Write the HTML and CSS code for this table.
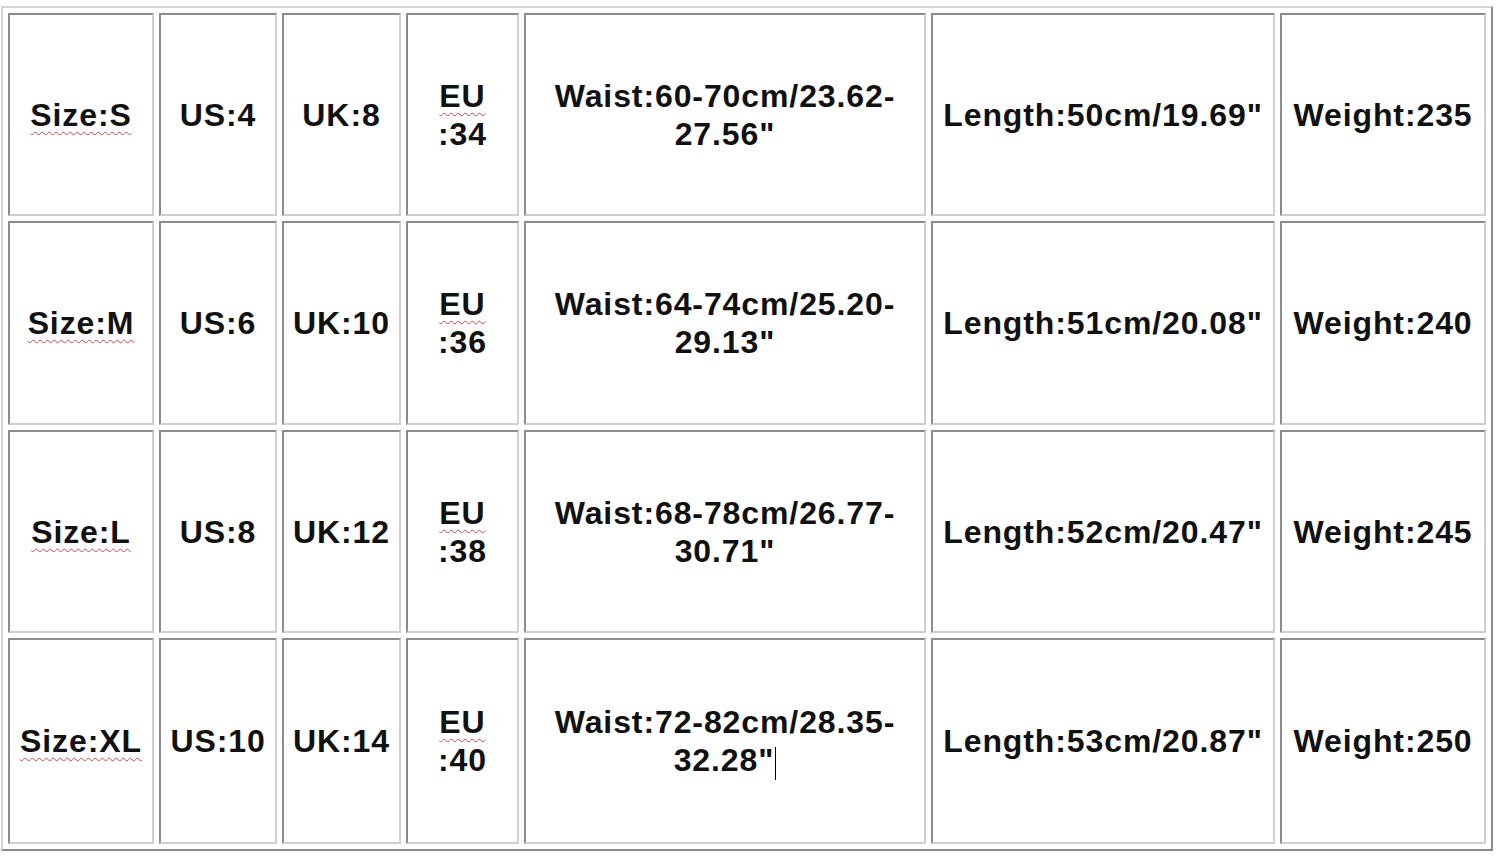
FILE: index.html
```html
<!DOCTYPE html>
<html>
<head>
<meta charset="utf-8">
<link rel="stylesheet" href="styles.css">
</head>
<body>
<div class="chart">
  <div class="cell"><div class="txt"><span class="spell">Size:S</span></div></div>
  <div class="cell"><div class="txt">US:4</div></div>
  <div class="cell"><div class="txt">UK:8</div></div>
  <div class="cell"><div class="txt"><span class="spell">EU</span><br>:34</div></div>
  <div class="cell"><div class="txt">Waist:60-70cm/23.62-<br>27.56"</div></div>
  <div class="cell"><div class="txt">Length:50cm/19.69"</div></div>
  <div class="cell"><div class="txt">Weight:235</div></div>

  <div class="cell"><div class="txt"><span class="spell">Size:M</span></div></div>
  <div class="cell"><div class="txt">US:6</div></div>
  <div class="cell"><div class="txt">UK:10</div></div>
  <div class="cell"><div class="txt"><span class="spell">EU</span><br>:36</div></div>
  <div class="cell"><div class="txt">Waist:64-74cm/25.20-<br>29.13"</div></div>
  <div class="cell"><div class="txt">Length:51cm/20.08"</div></div>
  <div class="cell"><div class="txt">Weight:240</div></div>

  <div class="cell"><div class="txt"><span class="spell">Size:L</span></div></div>
  <div class="cell"><div class="txt">US:8</div></div>
  <div class="cell"><div class="txt">UK:12</div></div>
  <div class="cell"><div class="txt"><span class="spell">EU</span><br>:38</div></div>
  <div class="cell"><div class="txt">Waist:68-78cm/26.77-<br>30.71"</div></div>
  <div class="cell"><div class="txt">Length:52cm/20.47"</div></div>
  <div class="cell"><div class="txt">Weight:245</div></div>

  <div class="cell"><div class="txt"><span class="spell">Size:XL</span></div></div>
  <div class="cell"><div class="txt">US:10</div></div>
  <div class="cell"><div class="txt">UK:14</div></div>
  <div class="cell"><div class="txt"><span class="spell">EU</span><br>:40</div></div>
  <div class="cell"><div class="txt">Waist:72-82cm/28.35-<br>32.28"<span class="caret"></span></div></div>
  <div class="cell"><div class="txt">Length:53cm/20.87"</div></div>
  <div class="cell"><div class="txt">Weight:250</div></div>
</div>
</body>
</html>
```
FILE: styles.css
```css
html, body {
  margin: 0;
  padding: 0;
  background: #ffffff;
}

body {
  width: 1500px;
  height: 858px;
  overflow: hidden;
  font-family: "Liberation Sans", Arial, sans-serif;
}

.chart {
  display: grid;
  grid-template-columns: 146px 118px 119px 113px 402px 344px 206px;
  grid-template-rows: 203px 204px 203px 206px;
  gap: 5px;
  padding: 5px;
  margin: 6px 0 0 1px;
  width: max-content;
  border-style: solid;
  border-width: 2px;
  border-color: #d4d4d4 #8a8a8a #8a8a8a #d4d4d4;
  background: #ffffff;
}

.cell {
  box-sizing: border-box;
  border-style: solid;
  border-width: 2px;
  border-color: #8c8c8c #cfcfcf #cfcfcf #8c8c8c;
  display: flex;
  align-items: center;
  justify-content: center;
}

.txt {
  text-align: center;
  font-weight: bold;
  font-size: 32px;
  line-height: 38px;
  letter-spacing: 0.9px;
  color: #111111;
  white-space: nowrap;
}

.spell {
  text-decoration-line: underline;
  text-decoration-style: wavy;
  text-decoration-color: #c8484f;
  text-decoration-thickness: 1px;
  text-underline-offset: 5px;
}

.caret {
  display: inline-block;
  width: 1px;
  height: 33px;
  background: #000000;
  vertical-align: -9px;
  margin-left: 1px;
}
```
